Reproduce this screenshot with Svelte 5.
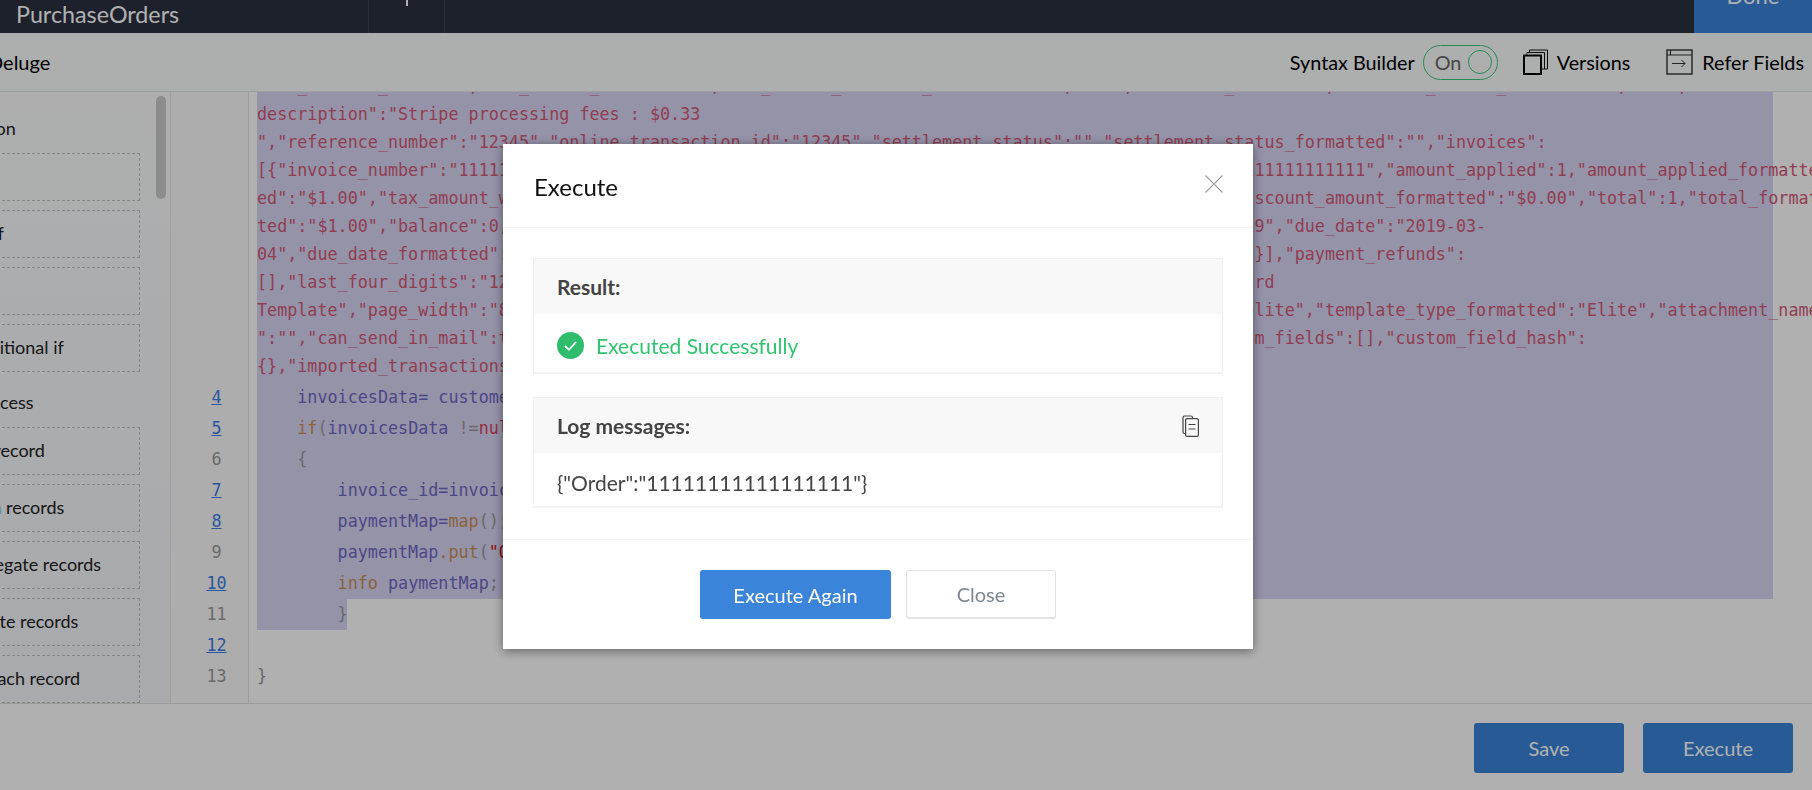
<script lang="ts">
  const sideGroups = [
    { title: 'Condition', items: ['if', 'else if', 'else', 'Conditional if'] },
    { title: 'Data Access', items: ['Add record', 'Fetch records', 'Aggregate records', 'Update records', 'For each record'] }
  ];

  // the long line 3 is wrapped by hand so each visual row stays where it is in the editor
  const wrapped = [
    '"tax_settled_total":0,"tax_amount_total":1.00,"fee_amount_reversed_amount":"100","a":1,"balances_due":1.00,"reversal_amount_total":1.00,"a":1,"',
    'description":"Stripe processing fees : $0.33',
    '","reference_number":"12345","online_transaction_id":"12345","settlement_status":"","settlement_status_formatted":"","invoices":',
    '[{"invoice_number":"' + '1'.repeat(90) + '","amount_applied":1,"amount_applied_formatted',
    'ed":"$1.00","tax_amount_withheld":0,"tax_amount_withheld_formatted":"$0.00","discount_amount":0,"discount_amount_formatted":"$0.00","total":1,"total_formatted',
    'ted":"$1.00","balance":0,"balance_formatted":"$0.00","date":"2019-02-04","date_formatted":"2/04/2019","due_date":"2019-03-',
    '04","due_date_formatted":"03/04/2019","balance_due":1,"bcy_balance":1,"price_precision":2,"total":1}],"payment_refunds":',
    '[],"last_four_digits":"1234","invoice_id":"1111","print":{"template_id":"1","template_name":"Standard',
    'Template","page_width":"8.27in","page_height":"11.69in","orientation":"portrait","template_type":"elite","template_type_formatted":"Elite","attachment_name',
    '":"","can_send_in_mail":true,"can_send_invoice_sms":false,"is_reconciled":false,"sources":"","custom_fields":[],"custom_field_hash":',
    '{},"imported_transactions":[]}'
  ];

  const lines = [
    { n: 4, link: true, tokens: [['v', '    invoicesData= customerPayments'], ['k', '.get'], ['p', '('], ['t', '"payments"'], ['p', ');']] },
    { n: 5, link: true, tokens: [['k', '    if'], ['p', '('], ['v', 'invoicesData '], ['p', '!='], ['n', 'null'], ['p', ')']] },
    { n: 6, link: false, tokens: [['p', '    {']] },
    { n: 7, link: true, tokens: [['v', '        invoice_id=invoicesData'], ['k', '.get'], ['p', '(0)'], ['k', '.get'], ['p', '('], ['t', '"invoice_id"'], ['p', ');']] },
    { n: 8, link: true, tokens: [['v', '        paymentMap='], ['k', 'map'], ['p', '();']] },
    { n: 9, link: false, tokens: [['v', '        paymentMap'], ['k', '.put'], ['p', '('], ['t', '"Order"'], ['p', ','], ['v', 'invoice_id'], ['p', ');']] },
    { n: 10, link: true, tokens: [['k', '        info '], ['v', 'paymentMap'], ['p', ';']] }
  ];
</script>

<div class="page">
  <header class="topbar">
    <div class="app-name">PurchaseOrders</div>
    <div class="tab"><span class="tab-mark"></span></div>
    <button class="done">Done</button>
  </header>

  <div class="toolbar">
    <div class="crumb">Deluge</div>
    <div class="tools">
      <span>Syntax Builder</span>
      <div class="toggle">
        <span>On</span>
        <i></i>
      </div>
      <div class="tool versions">
        <svg width="25" height="26" viewBox="0 0 25 26" fill="none">
          <path d="M4 5V3.500h17.500V20H19" stroke="#111" stroke-width="1" />
          <path d="M6.500 3V1h18v19h-3" stroke="#111" stroke-width="1" />
          <rect x="1" y="6.500" width="17" height="18.500" stroke="#000" stroke-width="2" />
        </svg>
        <span>Versions</span>
      </div>
      <div class="tool refer">
        <svg width="27" height="26" viewBox="0 0 27 26" fill="none" stroke="#333">
          <rect x="1" y="1" width="25" height="24" stroke-width="1.400" />
          <path d="M1 6h25M4.500 1v5" stroke-width="1.200" />
          <path d="M6 14.500h13M15.500 11l3.500 3.500-3.500 3.500" stroke-width="1" />
        </svg>
        <span>Refer Fields</span>
      </div>
    </div>
  </div>

  <div class="workspace">
    <aside class="sidebar">
      {#each sideGroups as group}
        <div class="side-title">{group.title}</div>
        <div class="side-list">
          {#each group.items as item}
            <div class="side-item">{item}</div>
          {/each}
        </div>
      {/each}
      <div class="scroll-thumb"></div>
    </aside>

    <div class="editor">
      <div class="code">
        <div class="row">
          <div class="gutter"></div>
          <div class="line selected">
            {#each wrapped as text}
              <div class="visual str">{text}</div>
            {/each}
          </div>
        </div>
        {#each lines as line}
          <div class="row">
            <div class="gutter">
              <span class:link={line.link}>{line.n}</span>
            </div>
            <div class="line selected">
              <div class="visual">{#each line.tokens as t}<span class={t[0]}>{t[1]}</span>{/each}</div>
            </div>
          </div>
        {/each}
        <div class="row">
          <div class="gutter">11</div>
          <div class="line selected short">
            <div class="visual"><span class="p">{'        }'}</span></div>
          </div>
        </div>
        <div class="row">
          <div class="gutter"><span class="link">12</span></div>
          <div class="line"><div class="visual"></div></div>
        </div>
        <div class="row">
          <div class="gutter">13</div>
          <div class="line">
            <div class="visual"><span class="p">{'}'}</span></div>
          </div>
        </div>
        <div class="row">
          <div class="gutter"></div>
          <div class="line"><div class="visual"></div></div>
        </div>
      </div>
    </div>
  </div>

  <footer class="footer">
    <button class="primary">Save</button>
    <button class="primary">Execute</button>
  </footer>
</div>

<div class="backdrop">
  <div class="modal">
    <div class="modal-head">
      <h2>Execute</h2>
      <svg width="18" height="18" viewBox="0 0 18 18" stroke="#a2a2a2" stroke-width="1.100">
        <path d="M.5.500l17 17M17.500.5l-17 17" />
      </svg>
    </div>
    <div class="modal-body">
      <section class="card">
        <div class="card-head">Result:</div>
        <div class="card-body success">
          <svg width="27" height="27" viewBox="0 0 27 27">
            <circle cx="13.500" cy="13.500" r="13.500" fill="#2fbd6d" />
            <path d="M8 14l4 3.800 7-7.800" fill="none" stroke="#fff" stroke-width="1.800" />
          </svg>
          <span>Executed Successfully</span>
        </div>
      </section>
      <section class="card">
        <div class="card-head">
          <span>Log messages:</span>
          <svg width="17" height="22" viewBox="0 0 17 22" fill="none" stroke="#444" stroke-width="1.200">
            <path d="M3.500 18.500H2.500a1.500 1.500 0 0 1-1.500-1.500V2.500A1.500 1.500 0 0 1 2.500 1h6.500a1.500 1.500 0 0 1 1.500 1.500V3.500" />
            <rect x="3.600" y="3.600" width="12.800" height="17.800" rx="1.500" fill="#f8f8f8" />
            <path d="M6.500 9.500h7M6.500 14h7" />
          </svg>
        </div>
        <div class="card-body log">{'{'}"Order":"11111111111111111"{'}'}</div>
      </section>
    </div>
    <div class="modal-foot">
      <button class="again">Execute Again</button>
      <button class="close">Close</button>
    </div>
  </div>
</div>

<style>
  :global(body) {
    margin: 0;
    overflow: hidden;
    background: #fff;
  }

  .page {
    width: 1812px;
    height: 790px;
    display: flex;
    flex-direction: column;
    overflow: hidden;
    font-family: Lato, "Open Sans", sans-serif;
    color: #000;
    background: #fff;
  }

  button {
    font-family: inherit;
    border: 0;
    cursor: pointer;
  }

  .topbar {
    flex: 0 0 33px;
    display: flex;
    overflow: hidden;
    background: #2a3041;
    color: #fff;
  }

  .app-name {
    width: 352px;
    padding-left: 16px;
    font-size: 23.300px;
    line-height: 28px;
  }

  .tab {
    width: 75px;
    border-left: 1px solid #3a4052;
    border-right: 1px solid #3a4052;
    display: flex;
    justify-content: center;
  }

  .tab-mark {
    width: 2px;
    height: 6px;
    background: #fff;
  }

  /* the page is scrolled, only the foot of this button shows */
  .done {
    flex: none;
    margin: -43px 0 0 auto;
    width: 118px;
    height: 76px;
    background: #3a85d9;
    color: #fff;
    font-size: 22px;
  }

  .toolbar {
    flex: 0 0 59px;
    box-sizing: border-box;
    display: flex;
    align-items: center;
    justify-content: space-between;
    background: #fbfcfd;
    border-bottom: 1px solid #e6e6e6;
    padding-right: 8px;
  }

  .crumb {
    margin-left: -12px;
    font-size: 20px;
  }

  .tools {
    display: flex;
    align-items: center;
    font-size: 19.800px;
  }

  .toggle {
    width: 75px;
    height: 35px;
    margin-left: 8px;
    box-sizing: border-box;
    border: 1px solid #3cc97f;
    border-radius: 18px;
    display: flex;
    align-items: center;
    justify-content: space-between;
    padding: 0 5px 0 11px;
    color: #666;
  }

  .toggle i {
    width: 22px;
    height: 22px;
    border: 1px solid #3cc97f;
    border-radius: 50%;
  }

  .tool {
    display: flex;
    align-items: center;
    gap: 9px;
  }

  .versions {
    margin-left: 25px;
  }

  .refer {
    margin-left: 36px;
  }

  .workspace {
    flex: 0 0 612px;
    display: flex;
    overflow: hidden;
    border-bottom: 1px solid #e0e0e0;
    box-sizing: border-box;
  }

  .sidebar {
    position: relative;
    width: 171px;
    flex: none;
    box-sizing: border-box;
    padding-top: 25px;
    border-right: 1px solid #e8e8e8;
    background: linear-gradient(#fcfdfd, #f4f6fb);
    overflow: hidden;
    font-size: 18px;
  }

  .side-title {
    margin-left: -62px;
    line-height: 22px;
    margin-bottom: 14px;
    color: #222;
    white-space: nowrap;
  }

  .side-list {
    display: flex;
    flex-direction: column;
    gap: 9px;
    margin-bottom: 19px;
  }

  .side-item {
    margin-left: -48px;
    width: 188px;
    height: 48px;
    flex: none;
    box-sizing: border-box;
    border: 1px dashed #c4c4c4;
    padding-left: 4.500px;
    line-height: 44px;
    color: #222;
    white-space: nowrap;
  }

  .scroll-thumb {
    position: absolute;
    left: 156px;
    top: 4px;
    width: 10px;
    height: 103px;
    border-radius: 5px;
    background: #cbcbcb;
  }

  .editor {
    flex: 1;
    min-width: 0;
    overflow: hidden;
    background: #fff;
  }

  .code {
    margin-top: -21.5px;
    font-family: "DejaVu Sans Mono", "Liberation Mono", monospace;
    font-size: 16.740px;
    line-height: 28px;
  }

  .row {
    display: flex;
  }

  .gutter {
    flex: none;
    width: 78px;
    box-sizing: border-box;
    border-right: 1px solid #e4e4e4;
    padding: 1.500px 0 0 14px;
    text-align: center;
    color: #9a9a9a;
    background: #fbfbfb;
  }

  .gutter .link {
    color: #3d7ee6;
    text-decoration: underline;
  }

  .line {
    flex: none;
    width: 1516px;
    margin-left: 8px;
    padding: 1.500px 0;
    color: #999;
  }

  .line.selected {
    background: #d8d5f4;
  }

  .line.short {
    width: 90px;
  }

  .visual {
    height: 28px;
    white-space: pre;
  }

  .str {
    color: #d25a78;
  }

  .t {
    color: #c81818;
  }

  .v {
    color: #6e68c4;
  }

  .k {
    color: #c98f55;
  }

  .p {
    color: #999;
  }

  .n {
    color: #d8405c;
  }

  .footer {
    flex: 1;
    display: flex;
    align-items: flex-start;
    justify-content: flex-end;
    gap: 19px;
    padding: 19px 19px 0 0;
    background: #fff;
  }

  .primary {
    width: 150px;
    height: 50px;
    border-radius: 3px;
    background: #3a85d9;
    color: #fff;
    font-size: 20px;
  }

  .backdrop {
    position: fixed;
    inset: 0;
    background: rgba(0, 0, 0, 0.31);
    font-family: Lato, "Open Sans", sans-serif;
  }

  .modal {
    position: absolute;
    left: 503px;
    top: 144px;
    width: 750px;
    height: 505px;
    background: #fff;
    display: flex;
    flex-direction: column;
    box-shadow: 0 2px 10px rgba(0, 0, 0, 0.45);
  }

  .modal-head {
    flex: 0 0 84px;
    display: flex;
    align-items: center;
    justify-content: space-between;
    box-sizing: border-box;
    padding: 0 30px 0 31px;
    border-bottom: 1px solid #f2f2f2;
  }

  .modal-head h2 {
    margin: 2px 0 0;
    font-size: 24px;
    font-weight: 400;
    color: #111;
  }

  .modal-head svg {
    margin-top: -3px;
  }

  .modal-body {
    flex: 0 0 312px;
    box-sizing: border-box;
    padding: 30px 30px 0;
    display: flex;
    flex-direction: column;
    gap: 23px;
    border-bottom: 1px solid #f2f2f2;
  }

  .card {
    border: 1px solid #f0f0f0;
    border-bottom: 2px solid #f3f3f3;
  }

  .card-head {
    height: 55px;
    background: #f8f8f8;
    padding: 0 23px;
    display: flex;
    align-items: center;
    justify-content: space-between;
    font-size: 21px;
    font-weight: 700;
    color: #444;
  }

  .card-body {
    height: 58px;
    box-sizing: border-box;
    padding: 5px 23px 0;
    display: flex;
    align-items: center;
  }

  .success {
    gap: 12px;
    color: #2fc56f;
    font-size: 21px;
  }

  .log {
    height: 53px;
    color: #444;
    font-size: 21px;
  }

  .modal-foot {
    flex: 1;
    display: flex;
    justify-content: center;
    align-items: flex-start;
    gap: 15px;
    padding-top: 30px;
  }

  .modal-foot button {
    height: 49px;
    border-radius: 3px;
    font-size: 20px;
  }

  .again {
    width: 191px;
    background: #3a85d9;
    color: #fff;
  }

  .close {
    width: 150px;
    background: #fff;
    color: #7d8790;
    border: 1px solid #e2e2e2;
    border-bottom-width: 2px;
  }
</style>
